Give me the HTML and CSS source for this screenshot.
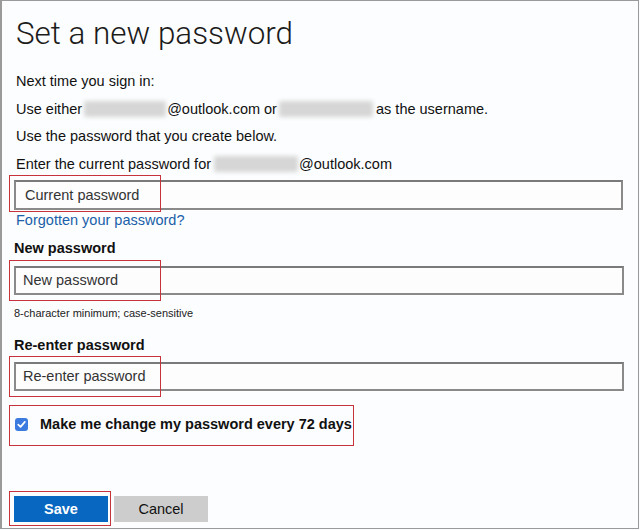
FILE: index.html
```html
<!DOCTYPE html>
<html>
<head>
<meta charset="utf-8">
<link rel="stylesheet" href="styles.css">
</head>
<body>
<div class="page">
  <h1 class="title">Set a new password</h1>
  <p class="line">Next time you sign in:</p>
  <p class="line">Use either <span class="blur b1"></span>@outlook.com or <span class="blur b2"></span> as the username.</p>
  <p class="line">Use the password that you create below.</p>
  <p class="line">Enter the current password for <span class="blur b3"></span>@outlook.com</p>

  <div class="field f1">
    <div class="input">Current password</div>
    <span class="mark mark-in m1"></span>
  </div>
  <a class="link">Forgotten your password?</a>

  <div class="label l1">New password</div>
  <div class="field f2">
    <div class="input">New password</div>
    <span class="mark mark-in"></span>
  </div>
  <div class="hint">8-character minimum; case-sensitive</div>

  <div class="label l2">Re-enter password</div>
  <div class="field f2">
    <div class="input">Re-enter password</div>
    <span class="mark mark-in"></span>
  </div>

  <div class="check-row">
    <span class="box"><svg viewBox="0 0 14 14" width="14" height="14"><path d="M3.5 7.2 L6 9.6 L10.6 4.2" fill="none" stroke="#fff" stroke-width="1.8" stroke-linecap="round" stroke-linejoin="round"/></svg></span>
    <span class="check-label">Make me change my password every 72 days</span>
    <span class="mark mark-check"></span>
  </div>

  <div class="buttons">
    <div class="save-wrap">
      <button class="btn save">Save</button>
      <span class="mark mark-save"></span>
    </div>
    <button class="btn cancel">Cancel</button>
  </div>
</div>
</body>
</html>
```

FILE: styles.css
```css
html, body {
  margin: 0;
  padding: 0;
  background: #fbfcfe;
}
.page {
  box-sizing: border-box;
  width: 639px;
  height: 529px;
  border: 1px solid #9a9a9a;
  border-left-width: 2px;
  background: #fcfdfe;
  padding: 0 0 0 12px;
  font-family: "Liberation Sans", Arial, sans-serif;
  color: #111;
  display: flex;
  flex-direction: column;
  align-items: flex-start;
}
.title {
  font-family: Roboto, "Liberation Sans", sans-serif;
  font-weight: 300;
  font-size: 31.4px;
  margin: 13px 0 0 2px;
  line-height: 39px;
  color: #1b1b1b;
}
.line {
  margin: 0;
  font-size: 14.5px;
  line-height: 27.5px;
  padding-left: 2px;
}
.title + .line { margin-top: 15px; }
.blur {
  display: inline-block;
  height: 16px;
  vertical-align: -3px;
  background: #d6d6d6;
  filter: blur(2px);
  border-radius: 2px;
}
.b1 { width: 82px; margin: 0 1px 0 -2px; }
.b2 { width: 94px; margin: 0 -1px 0 -2px; }
.b3 { width: 84px; margin: 0 1px 0 -1px; }

.field {
  position: relative;
  width: 609px;
}
.f1 { margin-top: 2px; }
.input {
  box-sizing: border-box;
  height: 30px;
  border: 2px solid #8a8a8a;
  border-top-color: #7a7a7a;
  background: #fdfdfe;
  font-size: 14.5px;
  color: #333;
  padding: 0 0 0 9px;
  line-height: 26px;
}
.f2 { width: 610px; }
.f2 .input { height: 29px; line-height: 25px; padding-left: 7px; }
.mark {
  position: absolute;
  box-sizing: border-box;
  border: 1.5px solid #c8323a;
  pointer-events: none;
}
.mark-in {
  left: -5px;
  top: -6px;
  width: 152px;
  height: 41px;
}
.m1 { top: -5px; height: 37px; }
.link {
  color: #1a5fa8;
  font-size: 14.5px;
  margin-top: 2px;
  padding-left: 2px;
  line-height: 16px;
}
.label {
  font-weight: bold;
  font-size: 14.5px;
  line-height: 18px;
}
.l1 { margin-top: 11px; margin-bottom: 9px; }
.l2 { margin-top: 16px; margin-bottom: 8px; }
.hint {
  font-size: 11px;
  line-height: 13px;
  margin-top: 12px;
  color: #222;
}
.check-row {
  position: relative;
  display: flex;
  align-items: center;
  margin-top: 22px;
  height: 22px;
}
.box {
  width: 13px;
  height: 13px;
  border-radius: 3px;
  background: #3b7be0;
  display: flex;
  align-items: center;
  justify-content: center;
  margin-left: 1px;
}
.box svg { width: 13px; height: 13px; }
.check-label {
  font-weight: bold;
  font-size: 14.5px;
  margin-left: 12px;
}
.mark-check {
  left: -5px;
  top: -8px;
  width: 345px;
  height: 41px;
}
.buttons {
  display: flex;
  gap: 6px;
  margin-top: 61px;
}
.save-wrap { position: relative; }
.btn {
  width: 94px;
  height: 26px;
  border: none;
  font-family: "Liberation Sans", Arial, sans-serif;
  font-size: 14.5px;
  padding: 0;
  display: block;
}
.save {
  background: #0867c0;
  color: #fff;
  font-weight: bold;
}
.cancel {
  background: #cdcdcd;
  color: #111;
}
.mark-save {
  left: -5px;
  top: -5px;
  width: 102px;
  height: 35px;
}
```
